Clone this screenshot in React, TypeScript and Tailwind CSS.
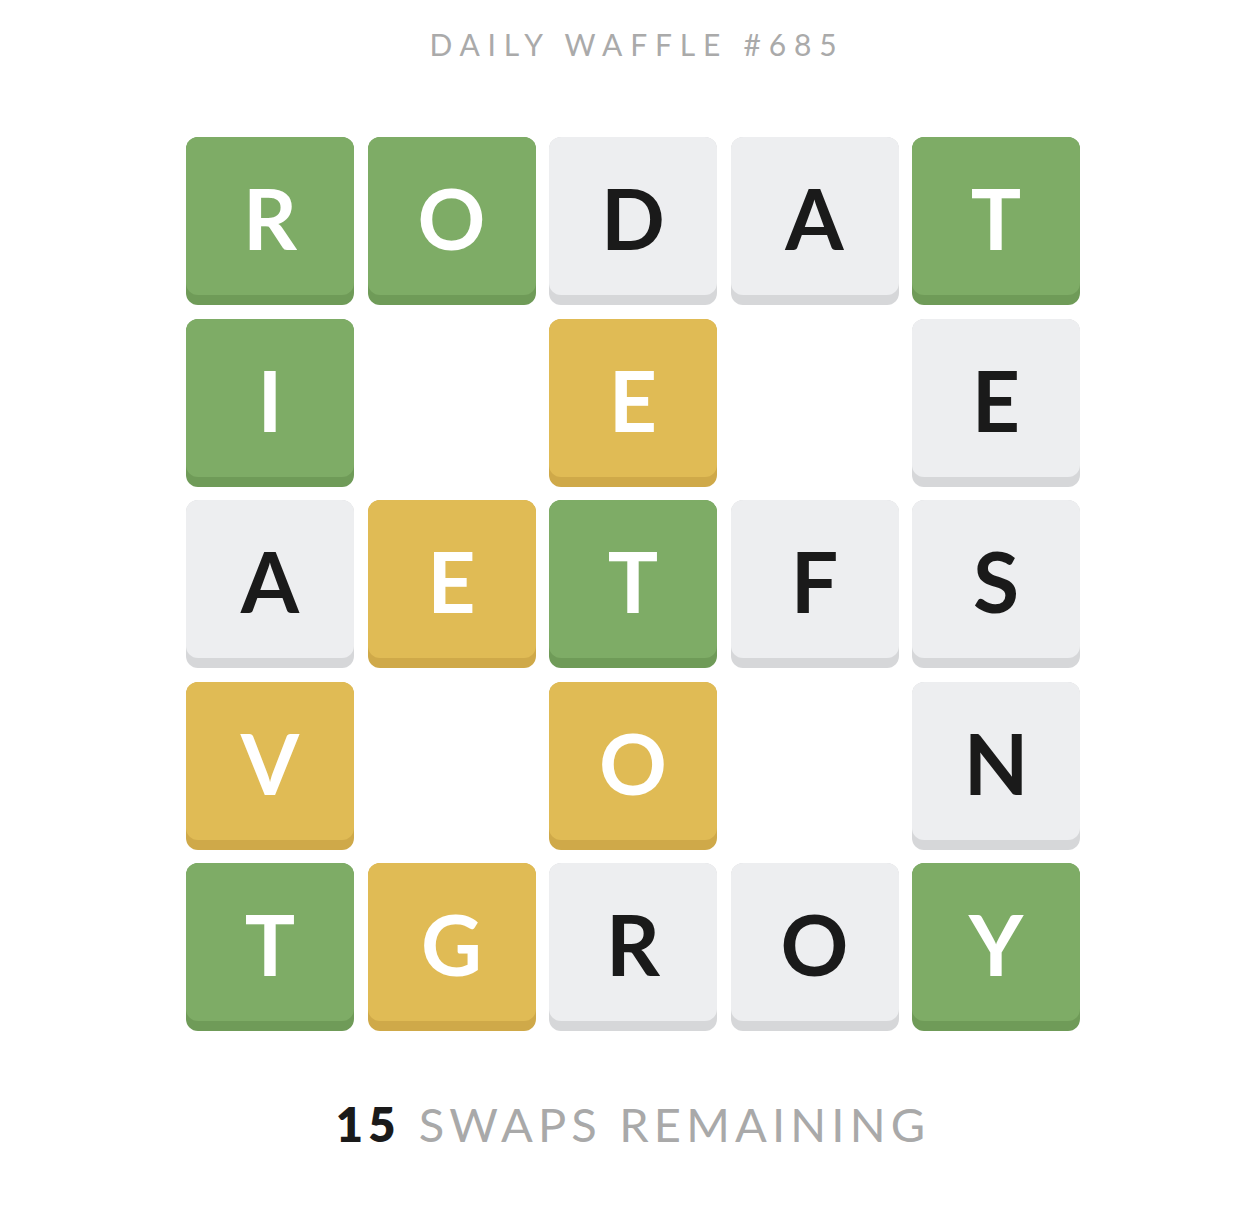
const board: [string, "g" | "y" | "w" | ""][][] = [
  [["R", "g"], ["O", "g"], ["D", "w"], ["A", "w"], ["T", "g"]],
  [["I", "g"], ["", ""], ["E", "y"], ["", ""], ["E", "w"]],
  [["A", "w"], ["E", "y"], ["T", "g"], ["F", "w"], ["S", "w"]],
  [["V", "y"], ["", ""], ["O", "y"], ["", ""], ["N", "w"]],
  [["T", "g"], ["G", "y"], ["R", "w"], ["O", "w"], ["Y", "g"]],
];

const tone = {
  g: { base: "bg-[#6f9b58]", face: "bg-[#7eac66]", text: "text-white" },
  y: { base: "bg-[#cfa949]", face: "bg-[#e0bb55]", text: "text-white" },
  w: { base: "bg-[#d6d7d9]", face: "bg-[#edeef0]", text: "text-[#1a1a1a]" },
};

function Tile({ letter, kind }: { letter: string; kind: "g" | "y" | "w" | "" }) {
  if (!kind) return <div className="w-[168px] h-[168px]" />;
  const t = tone[kind];
  return (
    <div className={`w-[168px] h-[168px] rounded-[12px] ${t.base}`}>
      <div
        className={`h-[158px] rounded-[12px] ${t.face} ${t.text} flex items-center justify-center text-[84px] font-bold leading-none pt-[4px]`}
      >
        {letter}
      </div>
    </div>
  );
}

export default function App() {
  return (
    <div
      className="min-h-[1216px] bg-white flex flex-col items-center pl-[20px]"
      style={{ fontFamily: "Lato, 'Open Sans', sans-serif" }}
    >
      <h1 className="mt-[29px] text-[30px] leading-none font-normal tracking-[0.26em] text-[#aaaaaa] pl-[0.26em]">
        DAILY WAFFLE #685
      </h1>

      <div className="mt-[78px] grid grid-cols-5 gap-[13.5px]">
        {board.flat().map(([l, k], i) => (
          <Tile key={i} letter={l} kind={k} />
        ))}
      </div>

      <p className="mt-[70px] text-[47px] leading-none tracking-[0.11em] text-[#a9a9a9]">
        <span className="font-extrabold text-[#1a1a1a] mr-[18px]">15</span>
        SWAPS REMAINING
      </p>
    </div>
  );
}
